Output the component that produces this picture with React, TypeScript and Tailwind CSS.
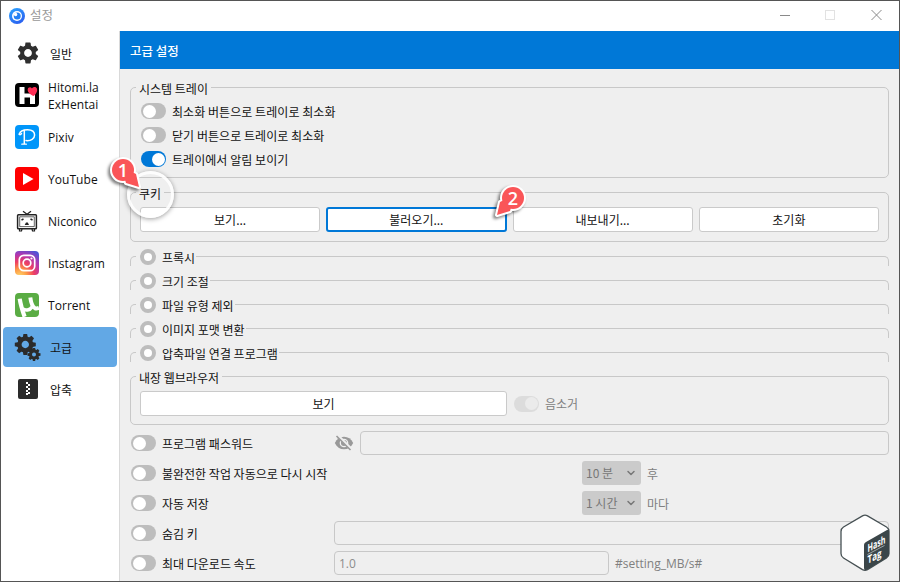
import type { ReactNode } from 'react'
import { MdSettings } from 'react-icons/md'
import { ChevronDown } from 'lucide-react'

const KO = "font-['Noto_Sans_CJK_KR',sans-serif]"
const LATIN = "font-['Open_Sans','Noto_Sans_CJK_KR',sans-serif]"

// Gear outline: `n` square teeth around a ring
function Gear({ cx, cy, r, n, hole }: { cx: number; cy: number; r: number; n: number; hole: number }) {
    const w = r * 0.25
    const body = r * 0.76
    return (
        <g transform={`translate(${cx} ${cy})`}>
            {Array.from({ length: n }, (_, i) => (
                <path
                    key={i}
                    d={`M${-w * 0.7} ${-r} H${w * 0.7} L${w} ${-r * 0.6} H${-w}Z`}
                    fill="#2b2b2b"
                    transform={`rotate(${(i * 360) / n})`}
                />
            ))}
            <circle r={(body + hole) / 2} fill="none" stroke="#2b2b2b" strokeWidth={body - hole} />
        </g>
    )
}

function AppLogo() {
    return (
        <svg width="16" height="16" viewBox="0 0 16 16">
            <defs>
                <linearGradient id="app" x1="0" y1="0" x2="0.6" y2="1">
                    <stop offset="0" stopColor="#2aa5ff" />
                    <stop offset="1" stopColor="#2b62f0" />
                </linearGradient>
            </defs>
            <circle cx="8" cy="8" r="8" fill="url(#app)" />
            <circle cx="8" cy="8" r="5" fill="#fff" />
            <circle cx="8.2" cy="8" r="3.500" fill="#2380f4" />
            <circle cx="6.600" cy="6.500" r="1.700" fill="#fff" />
        </svg>
    )
}

function HitomiIcon() {
    return (
        <svg width="24" height="24" viewBox="0 0 24 24">
            <rect width="24" height="24" rx="4" fill="#000" />
            <path d="M4.500 4h5v6.500h5.500V8h5v13h-5v-6.500H9.500V21h-5z" fill="#fff" />
            <path d="M18.700 13C15 11.500 12.500 9.200 12.700 6.500c.2-2.300 3-2.900 4.300-1 1-1.900 4.200-2.100 5 .2.800 2.500-1 5.200-3.300 7.300z" fill="#ff2d55" />
        </svg>
    )
}

function PixivIcon() {
    return (
        <svg width="24" height="24" viewBox="0 0 24 24" fill="none" stroke="#fff" strokeLinecap="round">
            <rect width="24" height="24" rx="4" fill="#0096fa" stroke="none" />
            <path d="M4.300 9.200C5 6.500 8.500 4.700 12.500 4.700c4.400 0 7.100 2.100 7.100 5.300 0 3.700-3.600 6.100-8.600 5.600" strokeWidth="1.500" />
            <path d="M4.300 9.200c.6.800 1.500.5 2.200-.6M9.300 5.500v13" strokeWidth="1.500" />
            <path d="M6.800 19.200h4.600" strokeWidth="1.300" />
        </svg>
    )
}

function YouTubeIcon() {
    return (
        <svg width="24" height="24" viewBox="0 0 24 24">
            <rect width="24" height="24" rx="4" fill="#f00" />
            <path d="M8 6v12l10.500-6z" fill="#fff" />
        </svg>
    )
}

function NiconicoIcon() {
    return (
        <svg width="24" height="24" viewBox="0 0 24 24" fill="none" stroke="#222">
            <path d="M8 2.300l4 3 4-3" strokeWidth="1.300" />
            <rect x="2.600" y="5.700" width="18.800" height="14" rx="0.800" strokeWidth="1.500" />
            <path d="M4.700 7.800h14.600v9.800H4.700z" strokeWidth="0.700" />
            <path d="M4.500 20v2h2l.5-2M17 20l.5 2h2v-2" strokeWidth="1.200" />
            <path d="M6.500 11l2-1M15.500 10l2 1" strokeWidth="1.500" />
            <path d="M9.700 16l1.300-2.500h1.800l1.200 2.500z" fill="#222" stroke="none" />
        </svg>
    )
}

function InstagramIcon() {
    return (
        <svg width="24" height="24" viewBox="0 0 24 24">
            <defs>
                <radialGradient id="ig" cx="0.2" cy="1.050" r="1.200">
                    <stop offset="0" stopColor="#ffd66b" />
                    <stop offset="0.250" stopColor="#fd9a45" />
                    <stop offset="0.500" stopColor="#ee3f62" />
                    <stop offset="0.750" stopColor="#b137b0" />
                    <stop offset="1" stopColor="#4e54d6" />
                </radialGradient>
            </defs>
            <rect width="24" height="24" rx="4" fill="url(#ig)" />
            <g fill="none" stroke="#fff" strokeWidth="1.700">
                <rect x="4.300" y="4.300" width="15.400" height="15.400" rx="4.500" />
                <circle cx="12" cy="12" r="3.800" />
            </g>
            <circle cx="16.500" cy="7.500" r="1.100" fill="#fff" />
        </svg>
    )
}

function TorrentIcon() {
    return (
        <svg width="24" height="24" viewBox="0 0 24 24">
            <rect width="24" height="24" rx="4" fill="#5aac44" />
            <g fill="none" stroke="#fff">
                <path d="M4.700 5.800C5.500 11 7 16.500 9.600 23.800" strokeWidth="4.200" />
                <path d="M7.500 15.500c2.500 2.600 7.500 1.800 9.500-1.500" strokeWidth="3.400" />
                <path d="M15.300 4.500c.7 5 1.900 9.200 4.500 10.600 1.300.6 2.700.4 4.200-.2" strokeWidth="4" />
            </g>
        </svg>
    )
}

function GearsIcon() {
    return (
        <svg width="28" height="28" viewBox="0 0 28 28">
            <Gear cx={12.300} cy={11.500} r={10.500} n={8} hole={3.700} />
            <Gear cx={21} cy={21.500} r={6.500} n={8} hole={2} />
        </svg>
    )
}

function ZipIcon() {
    return (
        <svg width="20" height="20" viewBox="0 0 20 20">
            <rect width="20" height="20" rx="2" fill="#2b2b2b" />
            <path d="M8 3h2v2H8zM10 5h2v2h-2zM8 7h2v2H8zM10 9h2v2h-2zM8 11h2v2H8zM10 13h2v2h-2zM8 14h2v2H8z" fill="#fff" />
        </svg>
    )
}

const NAV: { label: ReactNode; icon: ReactNode; ko?: boolean; active?: boolean }[] = [
    { label: '일반', icon: <MdSettings size={26} color="#2f2f2f" className="ml-0.5 shrink-0" />, ko: true },
    { label: <>Hitomi.la<br />ExHentai</>, icon: <HitomiIcon /> },
    { label: 'Pixiv', icon: <PixivIcon /> },
    { label: 'YouTube', icon: <YouTubeIcon /> },
    { label: 'Niconico', icon: <NiconicoIcon /> },
    { label: 'Instagram', icon: <InstagramIcon /> },
    { label: 'Torrent', icon: <TorrentIcon /> },
    { label: '고급', icon: <GearsIcon />, ko: true, active: true },
    { label: '압축', icon: <span className="ml-0.5"><ZipIcon /></span>, ko: true },
]

function Sidebar() {
    return (
        <nav className="w-[119px] shrink-0 border-r border-[#d9d9d9] bg-white flex flex-col gap-0.5 pt-0.5 px-0.5">
            {NAV.map((item, i) => (
                <div key={i} className={`h-10 shrink-0 w-[114px] rounded flex items-center ${item.active ? 'bg-[#62a8e5]' : ''}`}>
                    <div className="w-[45px] pl-[11px] shrink-0 flex items-center justify-center pr-[9px]">
                        <span className="w-7 shrink-0 flex justify-center">{item.icon}</span>
                    </div>
                    <span className={item.ko ? `${KO} text-xs pl-0.5 pt-0.5` : `${LATIN} text-xs leading-[17px] tracking-[0.05px] pt-px whitespace-nowrap`}>
                        {item.label}
                    </span>
                </div>
            ))}
        </nav>
    )
}

function Toggle({ on, muted }: { on?: boolean; muted?: boolean }) {
    const track = muted ? 'bg-[#dcdcdc]' : on ? 'bg-[#0078d7]' : 'bg-[#bdbdbd]'
    return (
        <span className={`w-[25px] h-4 shrink-0 rounded-full flex items-center px-[1.5px] ${track} ${on ? 'justify-end' : ''}`}>
            <span className={`size-[13px] rounded-full ${muted ? 'bg-[#ebebeb]' : 'bg-white'}`} />
        </span>
    )
}

function Group({ title, className, children }: { title: string; className: string; children: ReactNode }) {
    return (
        <section className={`relative border border-[#c8c8c8] rounded-[5px] px-[9px] ${className}`}>
            <h2 className="absolute left-[5px] -top-[9px] px-[3px] bg-[#efefef] leading-5 whitespace-nowrap">{title}</h2>
            {children}
        </section>
    )
}

function CollapsedGroup({ title }: { title: string }) {
    return (
        <section className="relative h-2.5 mb-3.5 border border-b-0 border-[#c8c8c8] rounded-t-[5px]">
            <div className="absolute left-[5px] -top-2.5 pl-1 pr-px bg-[#efefef] flex items-center gap-1.5 whitespace-nowrap h-5">
                <span className="size-4 rounded-full border-4 border-[#bdbdbd] bg-white" />
                <span className="relative top-px">{title}</span>
            </div>
        </section>
    )
}

function Button({ children, focused }: { children: ReactNode; focused?: boolean }) {
    return (
        <button className={`h-[25px] w-full rounded-[3px] bg-white leading-none ${focused ? 'border-2 border-[#0078d7]' : 'border border-[#cacaca]'}`}>
            {children}
        </button>
    )
}

function Field({ value, className }: { value?: string; className: string }) {
    return <div className={`h-6 border border-[#c8c8c8] rounded-[4px] px-1 pt-px flex items-center text-[#8c8c8c] text-xs ${LATIN} ${className}`}>{value}</div>
}

function Select({ children }: { children: ReactNode }) {
    return (
        <div className="w-[59px] h-6 rounded-[3px] bg-[#cbcbcb] text-[#777] flex items-center justify-between pl-1 pr-1">
            <span>{children}</span>
            <ChevronDown size={12} strokeWidth={3} />
        </div>
    )
}

function OptionRow({ label, children }: { label: string; children?: ReactNode }) {
    return (
        <div className="h-[30px] flex items-center">
            <div className="flex items-center gap-1.5 shrink-0 w-[204px] pl-px">
                <Toggle />
                <span className="relative top-px whitespace-nowrap">{label}</span>
            </div>
            {children}
        </div>
    )
}

function EyeOff() {
    return (
        <svg width="20" height="18" viewBox="0 0 20 18" className="mr-1.5 shrink-0">
            <path d="M.8 9c2-4.200 5.200-6.300 9.200-6.300S17.200 4.800 19.200 9c-2 4.200-5.200 6.300-9.200 6.300S2.800 13.200.8 9z" fill="#999" />
            <circle cx="10" cy="9" r="3.700" fill="none" stroke="#efefef" strokeWidth="1.300" />
            <path d="M3.200 1l14.500 14.500" stroke="#efefef" strokeWidth="3" />
            <path d="M2.500 2l14 14" stroke="#999" strokeWidth="1.600" />
        </svg>
    )
}

function Marker({ n, flip, className }: { n: number; flip?: boolean; className: string }) {
    return (
        <svg width="40" height="40" viewBox="0 0 40 40" className={`absolute overflow-visible ${className}`}>
            <g style={{ filter: 'drop-shadow(-2px 2px 1.5px rgba(0,0,0,.5))' }}>
                <g transform={flip ? 'translate(40 0) scale(-1 1)' : undefined} fill="#fa5558" strokeLinejoin="round">
                    <g stroke="#fff" strokeWidth="4">
                        <circle cx="18" cy="18" r="11" />
                        <path d="M21 31l10-9 3 13z" />
                    </g>
                    <circle cx="18" cy="18" r="11" />
                    <path d="M21 31l-2-7 6-5 6 3 3 13z" />
                </g>
            </g>
            <text x={flip ? 22 : 18} y="24.500" textAnchor="middle" fill="#fff" fontSize="18" fontWeight="600" fontFamily="Open Sans, sans-serif">
                {n}
            </text>
        </svg>
    )
}

function HashTagBadge() {
    return (
        <svg width="52" height="60" viewBox="0 0 52 60" className="absolute left-[838px] top-[512px] overflow-visible">
            <path d="M23.500 2.900Q26 1.500 28.500 2.900L47.500 14Q50 15.500 50 18.500V40.500Q50 43.500 47.500 45L28.500 56.600Q26 58 23.500 56.600L4.500 45Q2 43.500 2 40.500V18.500Q2 15.500 4.500 14z" fill="#fff" stroke="#465053" strokeWidth="1.300" />
            <path d="M25 32Q25 30 27 28.900L48 17Q50 16 50 18V41Q50 43.500 47.500 45L28.500 56.600Q25 58.500 25 55z" fill="#3b4649" />
            <g transform="translate(28.500 39.500) skewY(-28)" fill="#fff" fontFamily="Open Sans, sans-serif" fontWeight="700">
                <text x="0" y="0" fontSize="11" textLength="18" lengthAdjust="spacingAndGlyphs">Hash</text>
                <text x="0" y="11.500" fontSize="11" textLength="14" lengthAdjust="spacingAndGlyphs">Tag</text>
                <path d="M0 2h17" stroke="#b9c0c1" strokeWidth="0.700" />
            </g>
        </svg>
    )
}

export default function App() {
    return (
        <div className={`relative w-[900px] h-[582px] overflow-hidden border border-[#555] bg-[#efefef] flex flex-col text-xs text-[#111] ${KO}`}>
            <header className="h-[30px] shrink-0 bg-white flex items-center justify-between pl-2 pr-4 text-[#999]">
                <div className="flex items-center gap-[5px]">
                    <AppLogo />
                    <span className="text-[12.5px] relative -top-px">설정</span>
                </div>
                <svg width="104" height="12" viewBox="0 0 104 12" fill="none" className="relative -top-px">
                    <path d="M1 6.500h10" stroke="#8a8a8a" />
                    <rect x="46.500" y="1.500" width="9" height="9" stroke="#e2e2e2" />
                    <path d="M92.500 1l10 10M102.500 1l-10 10" stroke="#8a8a8a" />
                </svg>
            </header>

            <div className="flex flex-1 min-h-0">
                <Sidebar />
                <main className="flex-1 min-w-0">
                    <div className="h-[38px] bg-[#0078d7] text-white text-[12.5px] font-medium flex items-center pl-2.5 pt-0.5">고급 설정</div>

                    <div className="pl-2.5 pr-2.5 pt-[18px]">
                        <Group title="시스템 트레이" className="h-[91px] pt-[11px] pl-2.5">
                            {['최소화 버튼으로 트레이로 최소화', '닫기 버튼으로 트레이로 최소화', '트레이에서 알림 보이기'].map((label, i) => (
                                <div key={label} className="h-6 flex items-center gap-1.5">
                                    <Toggle on={i === 2} />
                                    <span className="relative top-px tracking-[0.05px]">{label}</span>
                                </div>
                            ))}
                        </Group>

                        <Group title="쿠키" className="h-[50px] mt-3.5 pt-3.5">
                            <div className="grid grid-cols-4 gap-1.5">
                                <Button>보기...</Button>
                                <Button focused>불러오기...</Button>
                                <Button>내보내기...</Button>
                                <Button>초기화</Button>
                            </div>
                        </Group>

                        <div className="pt-3.5">
                            <CollapsedGroup title="프록시" />
                            <CollapsedGroup title="크기 조절" />
                            <CollapsedGroup title="파일 유형 제외" />
                            <CollapsedGroup title="이미지 포맷 변환" />
                            <CollapsedGroup title="압축파일 연결 프로그램" />
                        </div>

                        <Group title="내장 웹브라우저" className="h-[49px] pt-3.5">
                            <div className="flex items-center">
                                <div className="w-[367px] mr-[7px]">
                                    <Button>보기</Button>
                                </div>
                                <Toggle on muted />
                                <span className="ml-1.5 text-[#808080]">음소거</span>
                            </div>
                        </Group>

                        <div className="pt-[3px]">
                            <OptionRow label="프로그램 패스워드">
                                <EyeOff />
                                <Field className="flex-1" />
                            </OptionRow>
                            <OptionRow label="불완전한 작업 자동으로 다시 시작">
                                <div className="ml-[248px] flex items-center gap-1.5 text-[#808080]">
                                    <Select>10 분</Select>
                                    <span className="relative top-px">후</span>
                                </div>
                            </OptionRow>
                            <OptionRow label="자동 저장">
                                <div className="ml-[248px] flex items-center gap-1.5 text-[#808080]">
                                    <Select>1 시간</Select>
                                    <span className="relative top-px">마다</span>
                                </div>
                            </OptionRow>
                            <OptionRow label="숨김 키">
                                <Field className="flex-1" />
                            </OptionRow>
                            <OptionRow label="최대 다운로드 속도">
                                <Field value="1.0" className="w-[275px]" />
                                <span className={`ml-1.5 pt-px text-xs text-[#808080] ${LATIN}`}>#setting_MB/s#</span>
                            </OptionRow>
                        </div>
                    </div>
                </main>
            </div>

            {/* Callouts over the form */}
            <div className="absolute left-[126px] top-[170px] size-[47px] rounded-full border-[3px] border-white/90 shadow-[0_1px_5px_rgba(0,0,0,0.4)]" />
            <Marker n={1} className="left-[104px] top-[151px]" />
            <Marker n={2} flip className="left-[490px] top-[179px]" />
            <HashTagBadge />
        </div>
    )
}
